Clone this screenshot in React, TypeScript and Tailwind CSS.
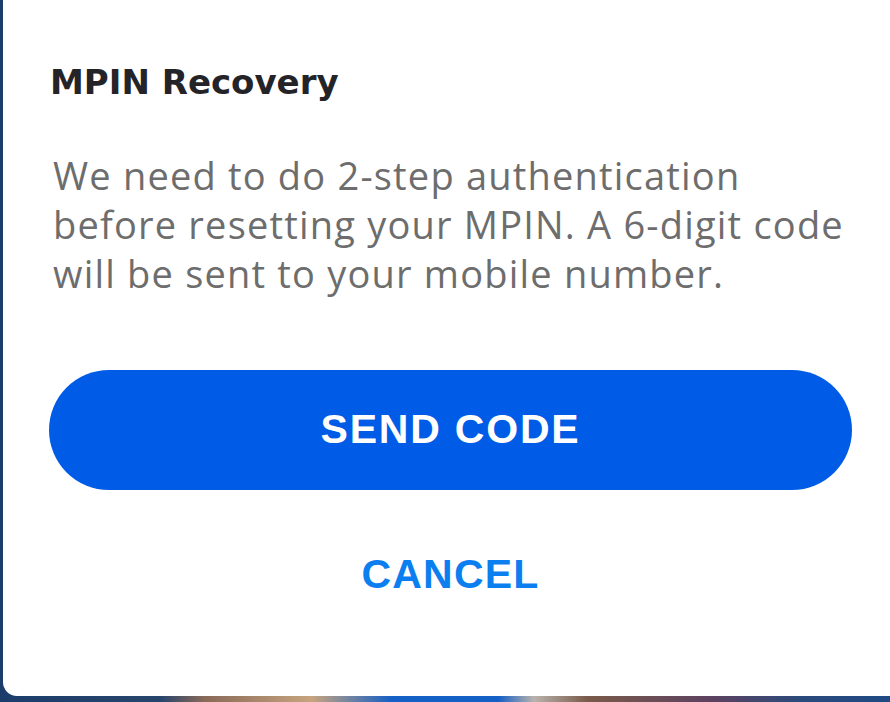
import React from 'react';

const App: React.FC = () => {
  return (
    <div className="w-[890px] h-[702px] overflow-hidden bg-[#1c3d6b] flex flex-col">
      {/* Dialog sheet (top and right run off screen) */}
      <div className="ml-[3px] w-[900px] h-[696px] bg-white rounded-bl-[14px] flex flex-col shrink-0">
        <h2
          className="mt-[62px] ml-[47px] text-[34px] leading-[40px] font-bold text-[#242428]"
          style={{ fontFamily: '"DejaVu Sans", Inter, sans-serif' }}
        >
          MPIN Recovery
        </h2>
        <p
          className="mt-[49px] ml-[50px] text-[38px] leading-[49px] text-[#6d6d6d] tracking-[1.2px]"
          style={{ fontFamily: '"Open Sans", "Noto Sans", sans-serif' }}
        >
          <span className="block whitespace-nowrap">We need to do 2-step authentication</span>
          <span className="block whitespace-nowrap">before resetting your MPIN. A 6-digit code</span>
          <span className="block whitespace-nowrap">will be sent to your mobile number.</span>
        </p>
        <div className="mt-[72px] w-[890px] pl-[46px] pr-[41px]">
          <button
            className="w-full h-[120px] rounded-full bg-[#005ce6] text-white text-[41px] font-bold tracking-[1.8px] flex items-center justify-center"
            style={{ fontFamily: '"Liberation Sans", Arial, sans-serif' }}
          >
            SEND CODE
          </button>
          <button
            className="mt-[40px] w-full h-[90px] text-[#0b7ef0] text-[41px] font-bold tracking-[1.2px] flex items-center justify-center"
            style={{ fontFamily: '"Liberation Sans", Arial, sans-serif' }}
          >
            CANCEL
          </button>
        </div>
      </div>
      {/* Background peeking below the sheet */}
      <div className="h-[6px] w-full bg-[linear-gradient(90deg,#1c3d6b_0%,#27456c_18%,#8a6a58_23%,#c7a47e_35%,#1560c6_44%,#1560c6_56%,#b9b3ad_60%,#7a5a4a_66%,#5c4260_80%,#2b4a7c_90%,#1f4a84_100%)]" />
    </div>
  );
};

export default App;
